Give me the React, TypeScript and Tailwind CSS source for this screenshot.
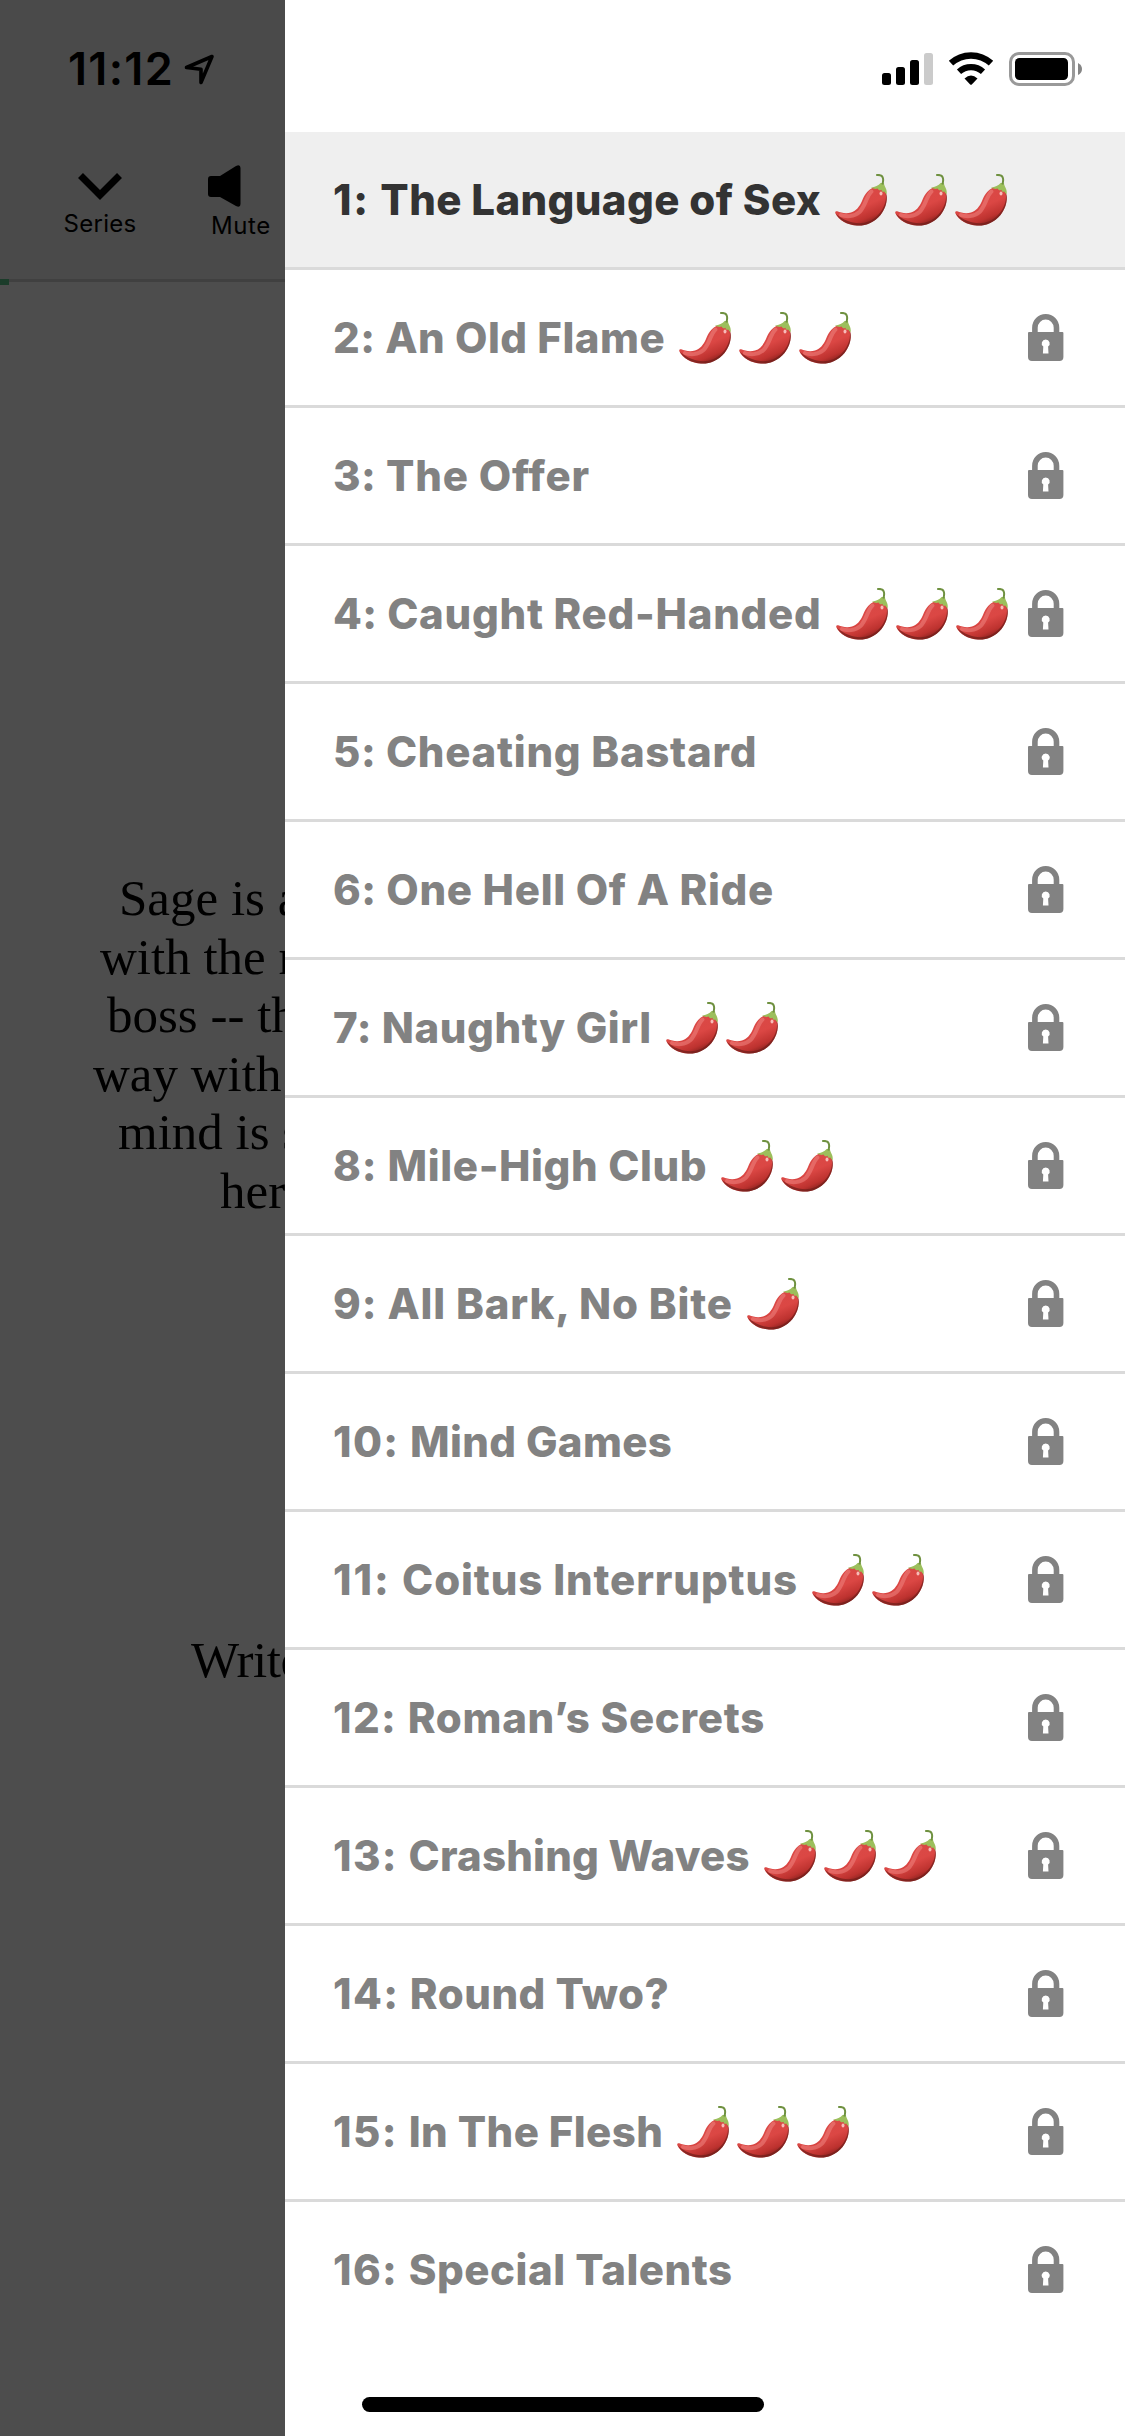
import React from 'react';

interface Chapter {
  num: number;
  title: string;
  heat: number;
  // letter spacing, tuned per row
  numTracking: string;
  tracking: string;
}

const chapters: Chapter[] = [
  { num: 1, title: 'The Language of Sex', heat: 3, numTracking: 'tracking-[1.600px]', tracking: 'tracking-[0.370px]' },
  { num: 2, title: 'An Old Flame', heat: 3, numTracking: 'tracking-[0.500px]', tracking: 'tracking-[0.500px]' },
  { num: 3, title: 'The Offer', heat: 0, numTracking: 'tracking-[0.500px]', tracking: 'tracking-[0.800px]' },
  { num: 4, title: 'Caught Red-Handed', heat: 3, numTracking: 'tracking-[0.400px]', tracking: 'tracking-[0.720px]' },
  { num: 5, title: 'Cheating Bastard', heat: 0, numTracking: 'tracking-[0.500px]', tracking: 'tracking-[0.720px]' },
  { num: 6, title: 'One Hell Of A Ride', heat: 0, numTracking: 'tracking-[0.500px]', tracking: 'tracking-[0.690px]' },
  { num: 7, title: 'Naughty Girl', heat: 2, numTracking: 'tracking-[0.500px]', tracking: 'tracking-[0.580px]' },
  { num: 8, title: 'Mile-High Club', heat: 2, numTracking: 'tracking-[0.900px]', tracking: 'tracking-[0.610px]' },
  { num: 9, title: 'All Bark, No Bite', heat: 1, numTracking: 'tracking-[0.900px]', tracking: 'tracking-[0.820px]' },
  { num: 10, title: 'Mind Games', heat: 0, numTracking: 'tracking-[1.350px]', tracking: 'tracking-[0.350px]' },
  { num: 11, title: 'Coitus Interruptus', heat: 2, numTracking: 'tracking-[2px]', tracking: 'tracking-[0.860px]' },
  { num: 12, title: 'Roman’s Secrets', heat: 0, numTracking: 'tracking-[1.350px]', tracking: 'tracking-[0.720px]' },
  { num: 13, title: 'Crashing Waves', heat: 3, numTracking: 'tracking-[1.350px]', tracking: 'tracking-[0.200px]' },
  { num: 14, title: 'Round Two?', heat: 0, numTracking: 'tracking-[1.350px]', tracking: 'tracking-[0.500px]' },
  { num: 15, title: 'In The Flesh', heat: 3, numTracking: 'tracking-[1.450px]', tracking: 'tracking-[0.390px]' },
  { num: 16, title: 'Special Talents', heat: 0, numTracking: 'tracking-[1.350px]', tracking: 'tracking-[0.520px]' },
];

const Pepper = () => (
  <svg width="60" height="52" viewBox="0 0 60 52" className="shrink-0">
    <path
      d="M36.5 14.5C39 12.5 47 13 50 17C53.5 22.5 51.5 33.5 45.5 41C39 49 30 52 22 51.5C12 51 3.500 46 .3 39.200C-.1 37.800 .9 37 2.300 37.300C6 39 11.500 39.800 16 38.500C21.500 36.800 24.500 32.500 27 27C29.500 21 32 17 36.500 14.500Z"
      fill="url(#pepperBody)"
    />
    <path
      d="M50.300 18C52.500 25 49.500 34 43.500 40.500C36 48.500 27 50.500 18 48.500C10 46.800 4 42.500 .8 39.500C4 46 12 51 22 51.500C30 52 39 49 45.500 41C51.500 33.500 53.500 23.500 50.300 18Z"
      fill="#74201c"
      opacity="0.75"
    />
    <path
      d="M36.500 17.500C31.500 22 30.500 32 24.500 38C19 43 11 43 6 41"
      fill="none"
      stroke="#ef8480"
      strokeWidth="4"
      strokeLinecap="round"
      opacity="0.55"
    />
    <ellipse cx="46" cy="19.500" rx="1.500" ry="2" fill="#fbc8c4" opacity="0.9" />
    <path
      d="M36 13.800C40 13 43.500 11.500 45.600 9L49 9C48.800 12 52.500 15 51.700 20C50.300 19.500 50 18.500 49.200 17.400C47.500 18.500 46.800 17.500 46.500 15.800C44.500 17 43.500 16 42.500 14.500C40.500 15.500 38.500 14.500 36 13.800Z"
      fill="#9cbf5c"
    />
    <path d="M47.400 10.500C48.800 6 48.300 1.800 45.200 1.200C43.500 .8 42.500 1 41.200 1" fill="none" stroke="#6f9140" strokeWidth="2" />
  </svg>
);

const Lock = () => (
  <svg width="36" height="48" viewBox="0 0 36 48" className="shrink-0">
    <path d="M6.900 19.500V13.800a10.800 11 0 0 1 21.600 0V19.500" fill="none" stroke="#828282" strokeWidth="5.600" />
    <path
      fillRule="evenodd"
      fill="#828282"
      d="M1 18H34.400a1 1 0 0 1 1 1V43a4 4 0 0 1-4 4H4a4 4 0 0 1-4-4V19a1 1 0 0 1 1-1ZM17.700 25.400a4 4 0 0 0-2.400 7.200L14.900 39.500H20.500L20.100 32.600a4 4 0 0 0-2.400-7.200Z"
    />
  </svg>
);

const StatusIcons = () => (
  <svg width="202" height="36" viewBox="0 0 202 36">
    <rect x="0" y="21" width="9" height="12" rx="2.500" />
    <rect x="14" y="15" width="9" height="18" rx="2.500" />
    <rect x="28" y="8" width="9" height="25" rx="2.500" />
    <rect x="42" y="1" width="9" height="32" rx="2.500" fill="#cbcbcb" />
    <path d="M69 11.200A29.500 29.500 0 0 1 109 11.200" fill="none" stroke="#000" strokeWidth="6.500" />
    <path d="M77 19.700A18 18 0 0 1 101 19.700" fill="none" stroke="#000" strokeWidth="6.200" />
    <path d="M82.500 26.500Q89 20.500 95.500 26.500L89.800 32.400Q89 33.200 88.200 32.400Z" />
    <rect x="128.500" y="1.500" width="63" height="31" rx="8.500" fill="none" stroke="#999" strokeWidth="3" />
    <rect x="133" y="6" width="53" height="22" rx="4.500" />
    <path d="M196 11Q200 13 200 17T196 23Z" fill="#858585" />
  </svg>
);

const blurb = [
  { text: 'Sage is a', indent: 'pl-[119px]' },
  { text: 'with the n', indent: 'pl-[100px]' },
  { text: 'boss -- th', indent: 'pl-[107px]' },
  { text: 'way with', indent: 'pl-[93px]' },
  { text: 'mind is s', indent: 'pl-[118px]' },
  { text: 'her', indent: 'pl-[220px]' },
];

const DimmedReader = () => (
  <div className="flex h-full w-[285px] shrink-0 flex-col overflow-hidden whitespace-nowrap bg-[#4d4d4d] text-black">
    <div className="h-[279px] shrink-0 bg-[#4a4a4a]">
      <div className="flex h-[138px] items-center pl-[68px]">
        <span className="text-[45px] font-semibold leading-[54px] tracking-[1.300px]">11:12</span>
        <svg width="31" height="31" viewBox="0 0 31 31" className="ml-[10px]">
          <path d="M2.500 13.500L28 2.500L17 28.500V15.200Z" fill="none" stroke="#000" strokeWidth="3.600" strokeLinejoin="round" />
        </svg>
      </div>
      <div className="flex pt-[27px]">
        <div className="flex w-[200px] flex-col items-center">
          <svg width="46" height="30" viewBox="0 0 46 30" className="mt-[7px]">
            <path d="M3.500 3.500L23 23L42.500 3.500" fill="none" stroke="#000" strokeWidth="7" />
          </svg>
          <span className="mt-[7px] text-[24px] leading-[29px] tracking-[0.300px]">Series</span>
        </div>
        <div className="flex flex-col pl-2">
          <svg width="34" height="43" viewBox="0 0 34 43">
            <path d="M3 11H12L28 1Q32.500-1 32.500 3V39Q32.500 43 28 41L12 32H3Q0 32 0 29V14Q0 11 3 11Z" />
          </svg>
          <span className="ml-[3px] mt-[3px] text-[24px] leading-[29px] tracking-[0.600px]">Mute</span>
        </div>
      </div>
    </div>
    <div className="h-[6px] shrink-0">
      <div className="h-[3px] bg-[#404040]">
        <div className="h-[6px] w-[9px] bg-[#1b3c2a]" />
      </div>
    </div>
    <div className="pt-[584px] font-['Liberation_Serif',serif] text-[51px] leading-[58.600px]">
      {blurb.map((line) => (
        <p key={line.text} className={line.indent}>
          {line.text}
        </p>
      ))}
      <p className="pl-[191px] pt-[410px] tracking-[-0.500px]">Write</p>
    </div>
  </div>
);

const App: React.FC = () => {
  return (
    <div className="flex h-[2436px] w-[1125px] overflow-hidden bg-white font-['Inter',sans-serif]">
      <DimmedReader />

      {/* Chapter drawer */}
      <div className="flex min-w-0 flex-1 flex-col">
        <div className="flex h-[132px] shrink-0 justify-end pr-[41px] pt-[52px]">
          <StatusIcons />
        </div>

        <ul>
          {chapters.map((chapter, i) => (
            <li
              key={chapter.num}
              className={`flex h-[138px] items-center pl-[48px] ${
                i === 0 ? 'bg-[#efefef] text-[#333333]' : 'text-[#828282]'
              } ${i < chapters.length - 1 ? 'border-b-[3px] border-[#dadada]' : 'pb-[3px]'}`}
            >
              <span className={`whitespace-pre text-[42px] font-extrabold leading-[50px] ${chapter.tracking}`}>
                <span className={chapter.numTracking}>{`${chapter.num}: `}</span>
                {chapter.title}
              </span>
              <div className="ml-[14px] flex">
                {Array.from({ length: chapter.heat }, (_, n) => (
                  <Pepper key={n} />
                ))}
              </div>
              {i > 0 && (
                <div className="ml-auto pr-[61px]">
                  <Lock />
                </div>
              )}
            </li>
          ))}
        </ul>

        {/* Home indicator */}
        <div className="ml-[77px] mt-[57px] h-[15px] w-[402px] rounded-full bg-black" />
      </div>

      <svg width="0" height="0" className="absolute">
        <defs>
          <linearGradient id="pepperBody" x1="0.25" y1="0.1" x2="0.75" y2="0.95">
            <stop offset="0" stopColor="#d94a47" />
            <stop offset="0.5" stopColor="#db4744" />
            <stop offset="0.8" stopColor="#bd322f" />
            <stop offset="1" stopColor="#7a1d1a" />
          </linearGradient>
        </defs>
      </svg>
    </div>
  );
};

export default App;
